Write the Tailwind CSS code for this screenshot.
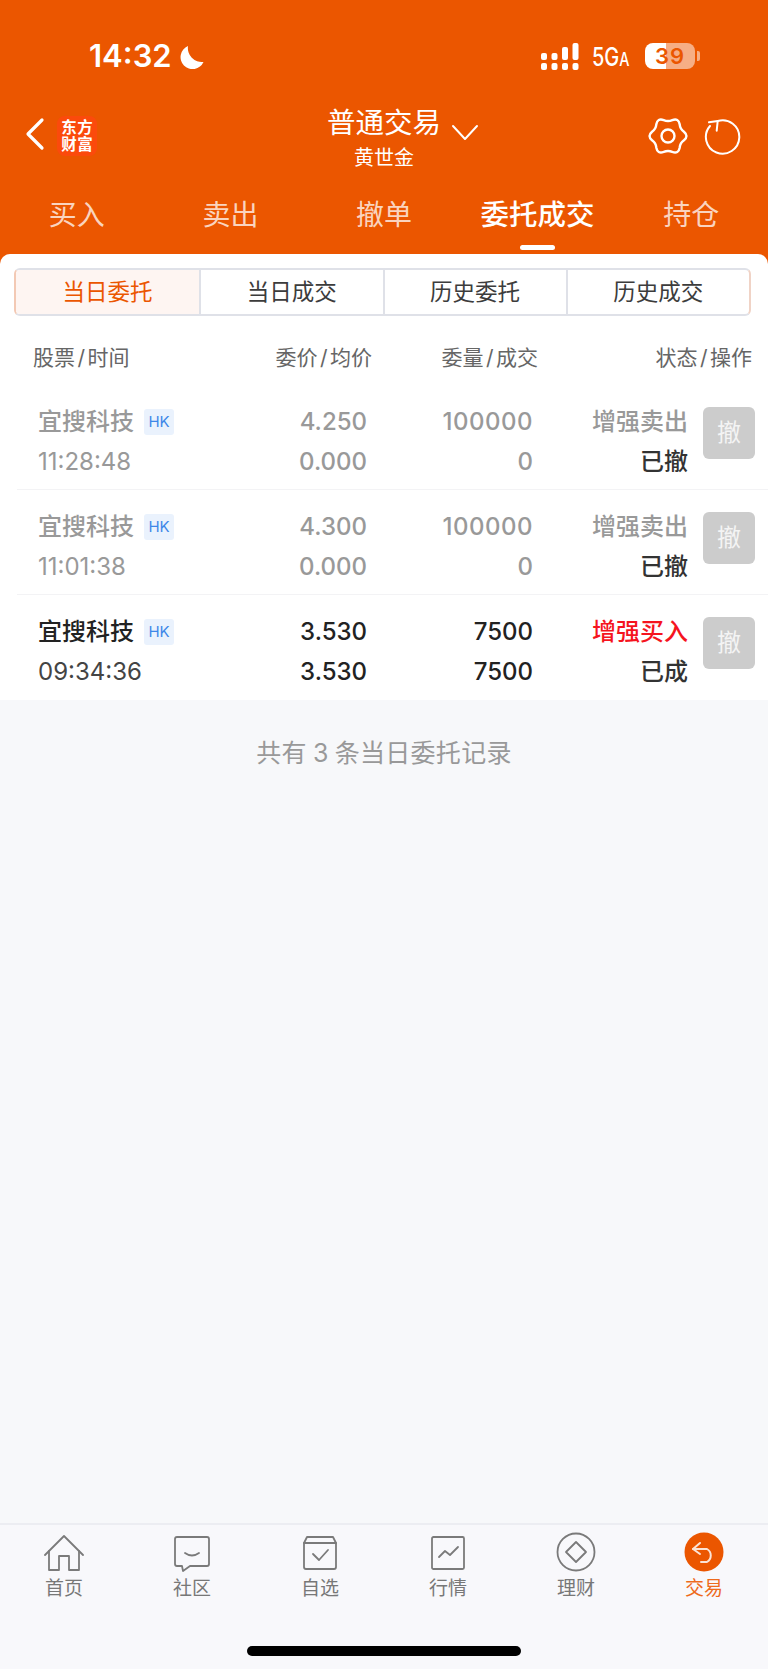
<!DOCTYPE html>
<html lang="zh-CN">
<head>
  <meta charset="UTF-8" />
  <meta name="viewport" content="width=device-width, initial-scale=1.0" />
  <title>委托成交</title>
  <script src="https://cdn.jsdelivr.net/npm/@tailwindcss/browser@4"></script>
</head>
<body class="bg-[#f7f8fa]">
  <div class="w-[768px] h-[1669px] flex flex-col overflow-hidden font-['Inter','Noto_Sans_CJK_SC',sans-serif]">

    <!-- 顶部橙色区域 -->
    <div class="bg-[#eb5600] text-white h-[268px] shrink-0 -mb-[14px]">
      <!-- 状态栏 -->
      <div class="h-[104px] flex">
        <div class="pt-[37px] pl-[89px] flex items-start gap-[7px]">
          <span class="text-[31px] leading-[38px] font-semibold">14:32</span>
          <svg class="mt-[8px]" width="25" height="25" viewBox="0 0 25 25"><path d="M9 1 A12 12 0 1 0 24.500 17 A14 14 0 0 1 9 1 Z" fill="#fff"/></svg>
        </div>
        <div class="ml-auto pt-[43px] flex items-start">
          <svg width="40" height="27" viewBox="0 0 40 27" fill="#fff">
            <rect x="0" y="10" width="6" height="7" rx="2"/><rect x="0" y="20" width="6" height="7" rx="2"/>
            <rect x="10.500" y="10" width="6" height="7" rx="2"/><rect x="10.500" y="20" width="6" height="7" rx="2"/>
            <rect x="21" y="4" width="6" height="13" rx="2"/><rect x="21" y="20" width="6" height="7" rx="2"/>
            <rect x="31.500" y="0" width="6" height="17" rx="2"/><rect x="31.500" y="20" width="6" height="7" rx="2"/>
          </svg>
          <span class="ml-[11px] w-[43px] text-[25px] leading-[28px] font-medium scale-x-[0.8] origin-left whitespace-nowrap">5G<span class="text-[18px]">A</span></span>
          <div class="ml-[10px] w-[50px] h-[26px] rounded-[8px] bg-[linear-gradient(90deg,#fff_41%,#f6ae85_41%)] text-[#eb5600] text-[22px] leading-[26px] font-semibold text-center tracking-[1px]">39</div>
          <div class="ml-[2px] mt-[8px] w-[3px] h-[10px] rounded-r-[2px] bg-[#f6ae85]"></div>
          <div class="w-[68px]"></div>
        </div>
      </div>
      <!-- 导航 -->
      <div class="h-[78px] grid grid-cols-[1fr_auto_1fr]">
        <div class="flex items-start pl-[25px] pt-[12px]">
          <svg width="20" height="36" viewBox="0 0 20 36" fill="none" stroke="#fff" stroke-width="3.200" stroke-linecap="round" stroke-linejoin="round"><path d="M17 4 L3 18 L17 32"/></svg>
          <div class="ml-[12px] w-[40px] h-[40px] rounded-[8px] bg-[#fb4a0c] grid grid-cols-2 place-items-center px-[4px] py-[3px] text-[15.500px] leading-[16px] font-bold">
            <span>东</span><span>方</span><span>财</span><span>富</span>
          </div>
        </div>
        <div class="flex flex-col items-center">
          <span class="text-[28.500px] leading-[38px]">普通交易</span>
          <span class="text-[20px] leading-[28px] mt-[2px]">黄世金</span>
        </div>
        <div class="flex items-start">
          <svg class="ml-[10px] mt-[20px]" width="28" height="18" viewBox="0 0 28 18" fill="none" stroke="#fff" stroke-width="2" stroke-linecap="round" stroke-linejoin="round"><path d="M2 2 L14 15 L26 2"/></svg>
          <svg class="ml-auto mt-[12px]" width="40" height="40" viewBox="0 0 40 40" fill="none" stroke="#fff" stroke-width="2.400" stroke-linejoin="round">
            <path d="M35.940 15.730 Q41 20 35.940 24.270 Q32.120 27 31.670 31.670 Q30.500 38.190 24.270 35.940 Q20 34 15.730 35.940 Q9.500 38.190 8.330 31.670 Q7.880 27 4.060 24.270 Q-1 20 4.060 15.730 Q7.880 13 8.330 8.330 Q9.500 1.810 15.730 4.060 Q20 6 24.270 4.060 Q30.500 1.810 31.670 8.330 Q32.120 13 35.940 15.730 Z"/>
            <circle cx="20" cy="20" r="6.500"/>
          </svg>
          <svg class="ml-[16px] mr-[26px] mt-[14px]" width="38" height="38" viewBox="0 0 38 38" fill="none" stroke="#fff" stroke-width="2" stroke-linecap="round" stroke-linejoin="round">
            <path d="M13.700 3 A16.700 16.700 0 1 1 6 8"/>
            <path d="M5 4.300 L13.700 3 L12.700 12.700"/>
          </svg>
        </div>
      </div>
      <!-- 标签 -->
      <div class="h-[72px] grid grid-cols-5 text-center">
        <div class="text-[28px] leading-[40px] pt-[13px] text-white/75">买入</div>
        <div class="text-[28px] leading-[40px] pt-[13px] text-white/75">卖出</div>
        <div class="text-[28px] leading-[40px] pt-[13px] text-white/75">撤单</div>
        <div class="flex flex-col items-center pt-[13px]">
          <span class="text-[28.500px] leading-[40px] font-medium">委托成交</span>
          <span class="mt-[10px] w-[35px] h-[5px] rounded-full bg-white"></span>
        </div>
        <div class="text-[28px] leading-[40px] pt-[13px] text-white/75">持仓</div>
      </div>
    </div>

    <!-- 白色面板 -->
    <div class="bg-white rounded-t-[10px] shrink-0 pt-[14px] relative">
      <div class="ml-[14px] w-[737px] h-[48px] grid grid-cols-4 text-[22.500px] leading-[44px] text-center text-[#3c3c3c] border-2 border-[#dfe1e8] border-l-[#f3c9b4] border-r-[#f0d3c6] rounded-[6px] overflow-hidden">
        <div class="bg-[#fef5f2] text-[#eb5600]">当日委托</div>
        <div class="border-l-2 border-[#dfe1e8]">当日成交</div>
        <div class="border-l-2 border-[#dfe1e8]">历史委托</div>
        <div class="border-l-2 border-[#dfe1e8]">历史成交</div>
      </div>

      <!-- 表头 -->
      <div class="h-[69px] pl-[33px] pt-[26px] grid grid-cols-[150px_189px_166px_214px] text-[21px] leading-[32px] text-[#666] text-right">
        <div class="text-left">股票<span class="mx-[2.500px]">/</span>时间</div>
        <div>委价<span class="mx-[2.500px]">/</span>均价</div>
        <div>委量<span class="mx-[2.500px]">/</span>成交</div>
        <div>状态<span class="mx-[2.500px]">/</span>操作</div>
      </div>

      <!-- 委托列表 -->
      <div class="ml-[17px] h-[105px] pl-[21px] pt-[17px] flex items-start border-b border-[#f3f3f5]">
        <div class="grid grid-cols-[190px_139px_166px_155px] auto-rows-[40px] text-[24px] leading-[40px] text-right text-[#999] font-medium">
          <div class="flex items-center text-left">宜搜科技<span class="ml-[10px] w-[30px] h-[26px] rounded-[3px] bg-[#eaf2fd] text-[#3d87e8] text-[15px] leading-[26px] text-center font-normal">HK</span></div>
          <div>4.250</div>
          <div class="tracking-[0.5px]">100000</div>
          <div>增强卖出</div>
          <div class="text-left font-normal">11:28:48</div>
          <div>0.000</div>
          <div>0</div>
          <div class="text-[#333]">已撤</div>
        </div>
        <div class="ml-[15px] mt-[5px] w-[52px] h-[52px] rounded-[6px] bg-[#cccccc] text-[#f4f4f4] text-[24px] leading-[52px] text-center">撤</div>
      </div>
      <div class="ml-[17px] h-[105px] pl-[21px] pt-[17px] flex items-start border-b border-[#f3f3f5]">
        <div class="grid grid-cols-[190px_139px_166px_155px] auto-rows-[40px] text-[24px] leading-[40px] text-right text-[#999] font-medium">
          <div class="flex items-center text-left">宜搜科技<span class="ml-[10px] w-[30px] h-[26px] rounded-[3px] bg-[#eaf2fd] text-[#3d87e8] text-[15px] leading-[26px] text-center font-normal">HK</span></div>
          <div>4.300</div>
          <div class="tracking-[0.5px]">100000</div>
          <div>增强卖出</div>
          <div class="text-left font-normal">11:01:38</div>
          <div>0.000</div>
          <div>0</div>
          <div class="text-[#333]">已撤</div>
        </div>
        <div class="ml-[15px] mt-[5px] w-[52px] h-[52px] rounded-[6px] bg-[#cccccc] text-[#f4f4f4] text-[24px] leading-[52px] text-center">撤</div>
      </div>
      <div class="ml-[17px] h-[105px] pl-[21px] pt-[17px] flex items-start">
        <div class="grid grid-cols-[190px_139px_166px_155px] auto-rows-[40px] text-[24px] leading-[40px] text-right text-[#222] font-medium">
          <div class="flex items-center text-left">宜搜科技<span class="ml-[10px] w-[30px] h-[26px] rounded-[3px] bg-[#eaf2fd] text-[#3d87e8] text-[15px] leading-[26px] text-center font-normal">HK</span></div>
          <div>3.530</div>
          <div>7500</div>
          <div class="text-[#f5141e]">增强买入</div>
          <div class="text-left text-[#444] font-normal">09:34:36</div>
          <div>3.530</div>
          <div>7500</div>
          <div class="text-[#333]">已成</div>
        </div>
        <div class="ml-[15px] mt-[5px] w-[52px] h-[52px] rounded-[6px] bg-[#cccccc] text-[#f4f4f4] text-[24px] leading-[52px] text-center">撤</div>
      </div>
    </div>

    <!-- 记录数 -->
    <div class="flex-1 pt-[35px] text-center text-[25px] leading-[36px] text-[#999] tracking-[0.3px]">共有<span class="mx-[6px]">3</span>条当日委托记录</div>

    <!-- 底部导航 -->
    <div class="h-[146px] shrink-0 bg-[#f8f8fb] border-t-2 border-[#ecedf2] relative">
      <div class="grid grid-cols-6 pt-[7px] text-center text-[19px] leading-[26px] text-[#777]">
        <div class="flex flex-col items-center">
          <svg width="40" height="40" viewBox="0 0 40 40" fill="none" stroke="#7a7a7a" stroke-width="1.800" stroke-linecap="round" stroke-linejoin="round">
            <path d="M1 23 L20 4 L39 23"/>
            <path d="M5 19 V38 H15 V24 H25 V38 H35 V19"/>
          </svg>
          <span class="mt-[4px]">首页</span>
        </div>
        <div class="flex flex-col items-center">
          <svg width="40" height="40" viewBox="0 0 40 40" fill="none" stroke="#7a7a7a" stroke-width="1.800" stroke-linecap="round" stroke-linejoin="round">
            <path d="M5 5 H35 Q37 5 37 7 V32 Q37 34 35 34 H18 L11 39 L10 34 H5 Q3 34 3 32 V7 Q3 5 5 5 Z"/>
            <path d="M13 21 Q20 26 27 21"/>
          </svg>
          <span class="mt-[4px]">社区</span>
        </div>
        <div class="flex flex-col items-center">
          <svg width="40" height="40" viewBox="0 0 40 40" fill="none" stroke="#7a7a7a" stroke-width="1.800" stroke-linecap="round" stroke-linejoin="round">
            <path d="M7 5 H33 L36 11 V35 Q36 37 34 37 H6 Q4 37 4 35 V11 Z"/>
            <path d="M4 11 H36"/>
            <path d="M13 22 L19 28 L28 18"/>
          </svg>
          <span class="mt-[4px]">自选</span>
        </div>
        <div class="flex flex-col items-center">
          <svg width="40" height="40" viewBox="0 0 40 40" fill="none" stroke="#7a7a7a" stroke-width="1.800" stroke-linecap="round" stroke-linejoin="round">
            <rect x="4" y="5" width="32" height="32" rx="1.500"/>
            <path d="M11 25 L17 19 L22 23 L30 15"/>
          </svg>
          <span class="mt-[4px]">行情</span>
        </div>
        <div class="flex flex-col items-center">
          <svg width="40" height="40" viewBox="0 0 40 40" fill="none" stroke="#7a7a7a" stroke-width="1.800" stroke-linejoin="round">
            <circle cx="20" cy="20" r="18.500"/>
            <path d="M20 10 L30 20 L20 30 L10 20 Z"/>
          </svg>
          <span class="mt-[4px]">理财</span>
        </div>
        <div class="flex flex-col items-center text-[#ee6a1c]">
          <svg width="40" height="40" viewBox="0 0 40 40" fill="none" stroke="#fbe3d5" stroke-width="2" stroke-linecap="round" stroke-linejoin="round">
            <circle cx="20" cy="20" r="19.500" fill="#eb5600" stroke="none"/>
            <path d="M16 11 L9 17 L16 22"/>
            <path d="M9 17 H23 A7.500 7.500 0 0 1 23 30 H17"/>
          </svg>
          <span class="mt-[4px]">交易</span>
        </div>
      </div>
      <div class="mt-[44px] mx-auto w-[274px] h-[10px] rounded-full bg-black"></div>
    </div>
  </div>
</body>
</html>
